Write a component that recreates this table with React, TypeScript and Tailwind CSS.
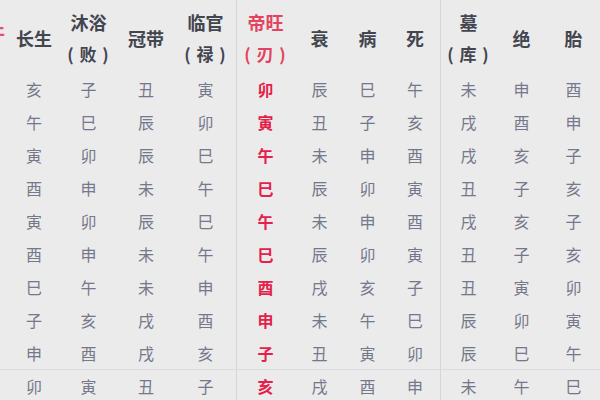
const HEADERS: { top: string; bottom?: string; red?: boolean }[] = [
  { top: "长生" },
  { top: "沐浴", bottom: "( 败 )" },
  { top: "冠带" },
  { top: "临官", bottom: "( 禄 )" },
  { top: "帝旺", bottom: "( 刃 )", red: true },
  { top: "衰" },
  { top: "病" },
  { top: "死" },
  { top: "墓", bottom: "( 库 )" },
  { top: "绝" },
  { top: "胎" },
];

const ROWS = [
  "亥子丑寅卯辰巳午未申酉",
  "午巳辰卯寅丑子亥戌酉申",
  "寅卯辰巳午未申酉戌亥子",
  "酉申未午巳辰卯寅丑子亥",
  "寅卯辰巳午未申酉戌亥子",
  "酉申未午巳辰卯寅丑子亥",
  "巳午未申酉戌亥子丑寅卯",
  "子亥戌酉申未午巳辰卯寅",
  "申酉戌亥子丑寅卯辰巳午",
  "卯寅丑子亥戌酉申未午巳",
];

const COLS = "grid-cols-[8px_52px_57px_58px_61px_58px_51px_45px_50px_56px_51px_53px]";

// columns that start with a faint divider
const divided = (i: number) => i === 4 || i === 8;

export default function App() {
  return (
    <div
      className="w-[600px] h-[400px] overflow-hidden bg-[#ebebec]"
      style={{ fontFamily: '"Noto Sans CJK SC", "Noto Sans", sans-serif' }}
    >
      <div className={`grid ${COLS}`}>
        {/* header */}
        <div className="h-[72px] flex items-center justify-end overflow-hidden">
          <span className="text-[18px] font-bold text-[#e2506a] whitespace-nowrap mr-[3px] pb-[4px]">
            干
          </span>
        </div>
        {HEADERS.map((h, i) => (
          <div
            key={h.top}
            className={`h-[72px] flex flex-col items-center justify-center pt-[4px] text-[18px] font-bold leading-[31px] whitespace-nowrap ${
              h.red ? "text-[#e4425e]" : "text-[#43454f]"
            } ${divided(i) ? "border-l border-[#d6d6da]" : ""}`}
          >
            <span>{h.top}</span>
            {h.bottom && <span className="text-[17px] tracking-[1px]">{h.bottom}</span>}
          </div>
        ))}

        {/* body */}
        {ROWS.map((row, r) => (
          <div key={r} className="contents">
            <div className={`h-[33px] ${r === 9 ? "border-t border-[#dcdce0]" : ""}`} />
            {row.split("").map((ch, i) => (
              <div
                key={i}
                className={`h-[33px] flex items-center justify-center text-[16px] ${
                  i === 4
                    ? "text-[#e5204a] font-bold"
                    : "text-[#75788a]"
                } ${divided(i) ? "border-l border-[#d6d6da]" : ""} ${
                  r === 9 ? "border-t border-t-[#dcdce0]" : ""
                }`}
              >
                {ch}
              </div>
            ))}
          </div>
        ))}
      </div>
    </div>
  );
}
